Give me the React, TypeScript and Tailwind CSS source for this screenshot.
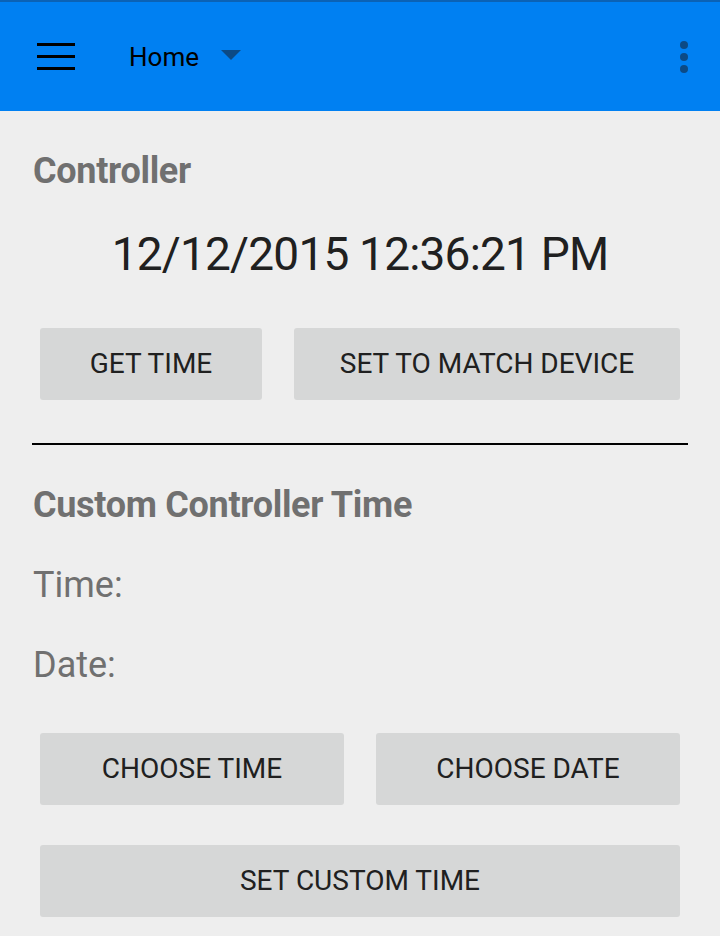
export default function App() {
  return (
    <div className="w-[720px] h-[936px] overflow-hidden bg-[#eeeeee] font-['Roboto','Noto_Sans',sans-serif]">
      <header className="h-[111px] bg-[#0080f2] border-t-2 border-[#0b62b5] flex items-center">
        <button className="ml-[37px] w-[38px] flex flex-col gap-[9px]">
          <span className="block h-[3px] bg-black" />
          <span className="block h-[3px] bg-black" />
          <span className="block h-[3px] bg-black" />
        </button>
        <div className="ml-[54px] flex items-center">
          <span className="text-[26px] text-black leading-none">Home</span>
          <svg width="20" height="10" viewBox="0 0 20 10" className="ml-[22px] -mt-[4px]">
            <path d="M0 0 L20 0 L10 10 Z" fill="#0c4a85" />
          </svg>
        </div>
        <div className="ml-auto mr-[32px] flex flex-col gap-[4px]">
          <span className="block w-[8px] h-[8px] rounded-full bg-[#0c4a85]" />
          <span className="block w-[8px] h-[8px] rounded-full bg-[#0c4a85]" />
          <span className="block w-[8px] h-[8px] rounded-full bg-[#0c4a85]" />
        </div>
      </header>

      <main className="px-[32px]">
        <h2 className="mt-[40px] ml-[1px] text-[36px] leading-[40px] font-bold text-[#707070] tracking-[-0.3px]">
          Controller
        </h2>
        <p className="mt-[36px] text-center text-[46px] leading-[54px] text-[#202020] tracking-[-0.8px]">
          12/12/2015 12:36:21 PM
        </p>
        <div className="mt-[47px] flex gap-[32px] px-[8px]">
          <button className="w-[222px] h-[72px] rounded-[3px] bg-[#d6d7d7] text-[28px] text-[#202020]">
            GET TIME
          </button>
          <button className="flex-1 h-[72px] rounded-[3px] bg-[#d6d7d7] text-[28px] text-[#202020]">
            SET TO MATCH DEVICE
          </button>
        </div>
        <div className="mt-[43px] h-[2px] bg-black" />

        <h2 className="mt-[40px] ml-[1px] text-[36px] leading-[40px] font-bold text-[#707070] tracking-[-0.3px]">
          Custom Controller Time
        </h2>
        <p className="mt-[40px] ml-[1px] text-[36px] leading-[40px] text-[#707070]">Time:</p>
        <p className="mt-[40px] ml-[1px] text-[36px] leading-[40px] text-[#707070]">Date:</p>

        <div className="mt-[48px] flex gap-[32px] px-[8px]">
          <button className="flex-1 h-[72px] rounded-[3px] bg-[#d6d7d7] text-[28px] text-[#202020]">
            CHOOSE TIME
          </button>
          <button className="flex-1 h-[72px] rounded-[3px] bg-[#d6d7d7] text-[28px] text-[#202020]">
            CHOOSE DATE
          </button>
        </div>
        <div className="mt-[40px] px-[8px]">
          <button className="w-full h-[72px] rounded-[3px] bg-[#d6d7d7] text-[28px] text-[#202020]">
            SET CUSTOM TIME
          </button>
        </div>
      </main>
    </div>
  );
}
